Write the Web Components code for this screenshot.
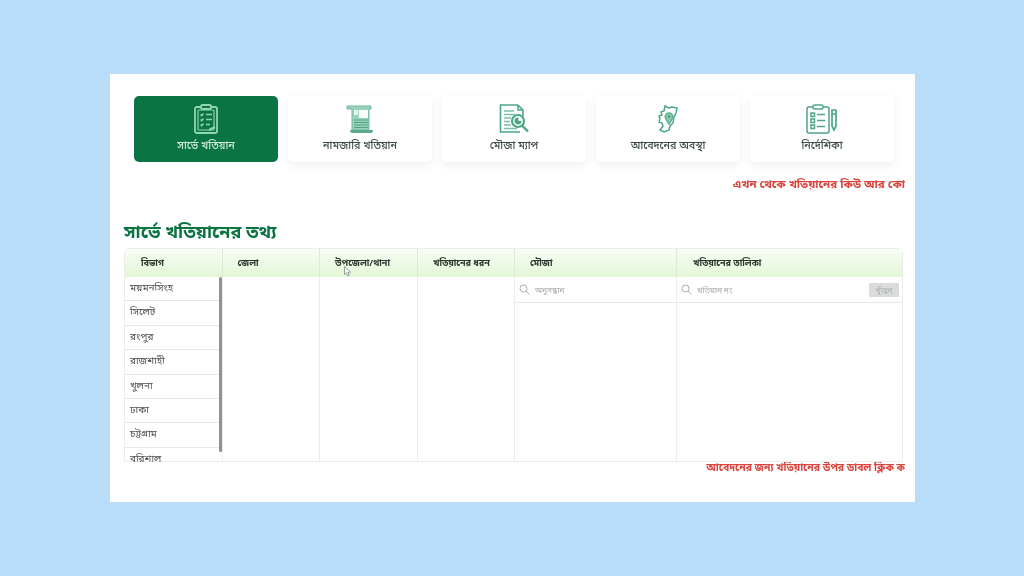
<!DOCTYPE html>
<html lang="bn"><head><meta charset="utf-8">
<style>
html,body{margin:0;padding:0;height:100%}
body{width:1024px;height:576px;overflow:hidden;background:#b9ddf8;font-family:"Noto Sans","Noto Sans Bengali","Liberation Sans",sans-serif;display:flex;flex-direction:column;align-items:flex-start;padding:74px 0 0 110px;box-sizing:border-box}
</style></head><body>
<survey-card>
  <div slot="tabs" style="display:contents">
    <nav-tab active label="সার্ভে খতিয়ান" icon="survey"></nav-tab>
    <nav-tab label="নামজারি খতিয়ান" icon="scroll"></nav-tab>
    <nav-tab label="মৌজা ম্যাপ" icon="doc"></nav-tab>
    <nav-tab label="আবেদনের অবস্থা" icon="map"></nav-tab>
    <nav-tab label="নির্দেশিকা" icon="guide"></nav-tab>
  </div>
</survey-card>
<script>
const ICONS={
survey:`<svg width="24" height="30" viewBox="0 0 24 30" fill="none" stroke="#93d6ae" stroke-width="1.800"><rect x="1" y="3" width="22" height="26" rx="2"/><rect x="4" y="6" width="16" height="20" rx="1" stroke-width="1.200"/><rect x="7" y="1" width="10" height="4" rx="1.500" fill="#0a7443"/><path d="M6.500 10.500l1.200 1.200L9.500 9.500M12 10.500h6M6.500 15.500l1.200 1.200 1.800-2.200M12 15.500h6M6.500 20.500l1.200 1.200 1.800-2.200M12 20.500h4" stroke-width="1.400"/><path d="M15 26l6-3" stroke-width="2"/></svg>`,
scroll:`<svg width="28" height="28" viewBox="0 0 28 28"><path d="M1 1h24v3h-2v21H6V4H1z" fill="#9bd2bc"/><path d="M1 1h24v3h-2v21H6V4H1z" fill="none" stroke="#6fb79b" stroke-width="1"/><rect x="13" y="5" width="9" height="8" fill="#f8fcfa"/><rect x="8" y="5" width="4" height="5" fill="#e2f3ec"/><path d="M8 15h14M8 17.500h14M8 20h14M8 22.500h14" stroke="#4fa283" stroke-width="1"/><path d="M4 25h23c0 2-1 3-2 3H6c-1 0-2-1-2-3z" fill="#5aa98b"/></svg>`,
doc:`<svg width="30" height="30" viewBox="0 0 30 30" fill="none" stroke="#4ea784" stroke-width="1.600"><path d="M19 1H1.500v27H21M19 1l5 5v6M19 1v5h5"/><path d="M5 7h10M5 10.500h11M5 14h7M5 17.500h6M5 21h7M5 24.500h13" stroke="#7fc0a6" stroke-width="1.300"/><circle cx="19" cy="17" r="6" stroke-width="2.200" fill="#fff"/><path d="M23 21.500l6 6" stroke-width="2.400"/><path d="M19.500 13.500a3.500 3.500 0 1 0 3 3.500h-3z" fill="#4ea784" stroke="none"/></svg>`,
map:`<svg width="24" height="30" viewBox="0 0 24 30" fill="none" stroke="#4ea784" stroke-width="1.500"><path d="M9 2l4 2 3-1 5 1-1 5-2 4-1 6-3 3-1 4-5 2-4-2 3-4-1-3-3-1 1-3-1-3 3-1-1-3 3-1z"/><path d="M13 20c-2-3-3.800-5-3.800-7.300a3.800 3.800 0 0 1 7.600 0c0 2.300-1.800 4.300-3.800 7.300z" fill="#8ecbb3" stroke="#5db090"/><circle cx="13" cy="12.500" r="1.300" fill="#3b9a73" stroke="none"/></svg>`,
guide:`<svg width="32" height="30" viewBox="0 0 32 30" fill="none" stroke="#4ea784" stroke-width="1.500"><rect x="1" y="3" width="22" height="26" rx="2"/><rect x="7" y="1" width="10" height="4" rx="1.500" fill="#fff"/><rect x="5" y="9" width="3.500" height="3.500"/><rect x="5" y="15" width="3.500" height="3.500"/><rect x="5" y="21" width="3.500" height="3.500"/><path d="M11 10.500h8M11 16.500h8M11 22.500h8"/><path d="M26 6h4v16l-2 4-2-4z" stroke-width="1.700"/><path d="M26 10h4"/></svg>`
};
class NavTab extends HTMLElement{
  connectedCallback(){
    const s=this.shadowRoot||this.attachShadow({mode:'open'});
    s.innerHTML=`<style>
:host{display:flex;flex-direction:column;align-items:center;box-sizing:border-box;width:144px;height:66px;border-radius:5px;background:#fff;box-shadow:0 3px 8px rgba(60,80,70,.09);padding-top:8px;color:#3d4a44;font-size:10.700px;line-height:14px;font-weight:500}
:host([active]){background:#0a7443;color:#cdeeda;box-shadow:none}
.i{height:30px;display:flex;align-items:center;justify-content:center}
.t{margin-top:4px}
</style><div class="i">${ICONS[this.getAttribute('icon')]}</div><div class="t">${this.getAttribute('label')}</div>`;
  }
}
customElements.define('nav-tab',NavTab);

class SearchBox extends HTMLElement{
  connectedCallback(){
    const s=this.shadowRoot||this.attachShadow({mode:'open'});
    s.innerHTML=`<style>
:host{display:flex;align-items:center;gap:5px;height:26px;box-sizing:border-box;padding:0 3px 0 4px;border-bottom:1px solid #e6e9e7;color:#a3a8a5;font-size:8px}
svg{flex:none}
.p{flex:1}
.b{width:30px;height:14px;background:#d9dcda;color:#aeb2af;text-align:center;line-height:14px;border-radius:1px}
</style><svg width="11" height="11" viewBox="0 0 11 11" fill="none" stroke="#a9adab" stroke-width="1"><circle cx="4.500" cy="4.500" r="3.500"/><path d="M7 7l3.500 3.500"/></svg><span class="p">${this.getAttribute('ph')}</span>${this.getAttribute('btn')?`<span class="b">${this.getAttribute('btn')}</span>`:''}`;
  }
}
customElements.define('search-box',SearchBox);

class SurveyTable extends HTMLElement{
  connectedCallback(){
    const s=this.shadowRoot||this.attachShadow({mode:'open'});
    const items=['ময়মনসিংহ','সিলেট','রংপুর','রাজশাহী','খুলনা','ঢাকা','চট্টগ্রাম','বরিশাল'];
    s.innerHTML=`<style>
:host{position:relative;display:grid;grid-template-columns:97.500px 97.500px 98px 97px 162px 1fr;grid-template-rows:28px 185px;box-sizing:border-box;width:779px;height:214px;border:1px solid #e9ece9;border-radius:5px 5px 0 0;color:#222}
.h{background:linear-gradient(#f8fdf5,#e2f7d5);border-right:1px solid #dfe8da;font-size:9px;font-weight:700;line-height:27px;color:#2c332e;box-sizing:border-box}
.h.last{border-right:0}
.c{border-right:1px solid #eceeec;min-height:0;box-sizing:border-box;overflow:hidden}
.c.last{border-right:0}
.list{position:relative;margin:0;padding:0;list-style:none;overflow:hidden;height:185px}
.list li{height:24.400px;box-sizing:border-box;border-bottom:1px solid #e6e8e6;font-size:10px;line-height:20px;padding-left:5px;color:#4b504d}
.bar{position:absolute;right:0;top:0;width:3px;height:175px;background:#8e9391;border-radius:2px}
.cur{position:absolute;left:219px;top:17px}
</style>
<div class="h" style="padding-left:16px">বিভাগ</div>
<div class="h" style="padding-left:15px">জেলা</div>
<div class="h" style="padding-left:15px">উপজেলা/থানা</div>
<div class="h" style="padding-left:15px">খতিয়ানের ধরন</div>
<div class="h" style="padding-left:15px">মৌজা</div>
<div class="h last" style="padding-left:16px">খতিয়ানের তালিকা</div>
<div class="c list"><ul class="list">${items.map(i=>`<li>${i}</li>`).join('')}</ul><div class="bar"></div></div>
<div class="c"></div><div class="c"></div><div class="c"></div>
<div class="c"><search-box ph="অনুসন্ধান"></search-box></div>
<div class="c last"><search-box ph="খতিয়ান নং" btn="খুঁজুন"></search-box></div>
<svg class="cur" width="8" height="11" viewBox="0 0 8 11"><path d="M.5.500v8l2-1.700 1.300 3 1.400-.6-1.300-3h2.600z" fill="#fff" stroke="#7d8884" stroke-width=".8"/></svg>`;
  }
}
customElements.define('survey-table',SurveyTable);

class NoticeLine extends HTMLElement{
  connectedCallback(){
    const s=this.shadowRoot||this.attachShadow({mode:'open'});
    s.innerHTML=`<style>:host{display:block;width:781px;overflow:hidden;white-space:nowrap;text-align:right;color:#d9443f;font-weight:700;line-height:14px}</style><slot></slot>`;
  }
}
customElements.define('notice-line',NoticeLine);

class SurveyCard extends HTMLElement{
  connectedCallback(){
    const s=this.attachShadow({mode:'open'});
    s.innerHTML=`<style>
:host{display:block;box-sizing:border-box;width:805px;height:428px;background:#fff;padding:22px 0 0 14px;filter:blur(.5px)}
.tabs{display:flex;gap:10px;margin-left:10px}
.n1{margin-top:15px;font-size:11.500px}
h2{margin:28px 0 0;font-size:18px;line-height:24px;font-weight:700;color:#0a7443;height:29px}
.n2{margin-top:-2px;font-size:10.400px}
</style>
<div class="tabs"><slot name="tabs"></slot></div>
<notice-line class="n1">এখন থেকে খতিয়ানের কিউ আর কো</notice-line>
<h2>সার্ভে খতিয়ানের তথ্য</h2>
<survey-table></survey-table>
<notice-line class="n2">আবেদনের জন্য খতিয়ানের উপর ডাবল ক্লিক ক</notice-line>`;
  }
}
customElements.define('survey-card',SurveyCard);
</script>
</body></html>
